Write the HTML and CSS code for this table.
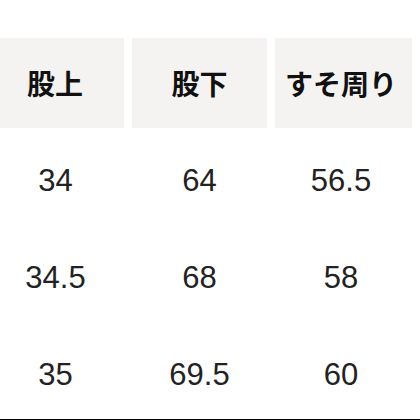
FILE: index.html
```html
<!DOCTYPE html>
<html lang="ja">
<head>
<meta charset="utf-8">
<link rel="stylesheet" href="styles.css">
</head>
<body>
<div class="page">
  <div class="table">
    <div class="cell head c1">股上</div>
    <div class="cell head c2">股下</div>
    <div class="cell head c3">すそ周り</div>

    <div class="cell num c1">34</div>
    <div class="cell num c2">64</div>
    <div class="cell num c3">56.5</div>

    <div class="cell num c1">34.5</div>
    <div class="cell num c2">68</div>
    <div class="cell num c3">58</div>

    <div class="cell num c1">35</div>
    <div class="cell num c2">69.5</div>
    <div class="cell num c3">60</div>
  </div>
</div>
</body>
</html>
```
FILE: styles.css
```css
html, body {
  margin: 0;
  padding: 0;
  background: #ffffff;
}
.page {
  width: 420px;
  height: 420px;
  box-sizing: border-box;
  padding-top: 38px;
  border-bottom: 1px solid #000;
  overflow: hidden;
}
.table {
  display: grid;
  grid-template-columns: 124px 135px 137px;
  grid-template-rows: 94px 97px 97px 97px;
  column-gap: 8px;
  row-gap: 0;
}
.cell {
  display: flex;
  align-items: center;
  justify-content: center;
  box-sizing: border-box;
}
.head {
  background: #f4f3f2;
  margin-bottom: 4px;
  font-family: "Noto Sans CJK JP", sans-serif;
  font-weight: 700;
  font-size: 28px;
  color: #111;
}
.num {
  font-family: "Liberation Sans", Arial, sans-serif;
  font-size: 31px;
  color: #222;
}
.c1 { padding-right: 14px; }
.c3 { padding-right: 5px; }
.num.c1 { padding-right: 13px; }
```
